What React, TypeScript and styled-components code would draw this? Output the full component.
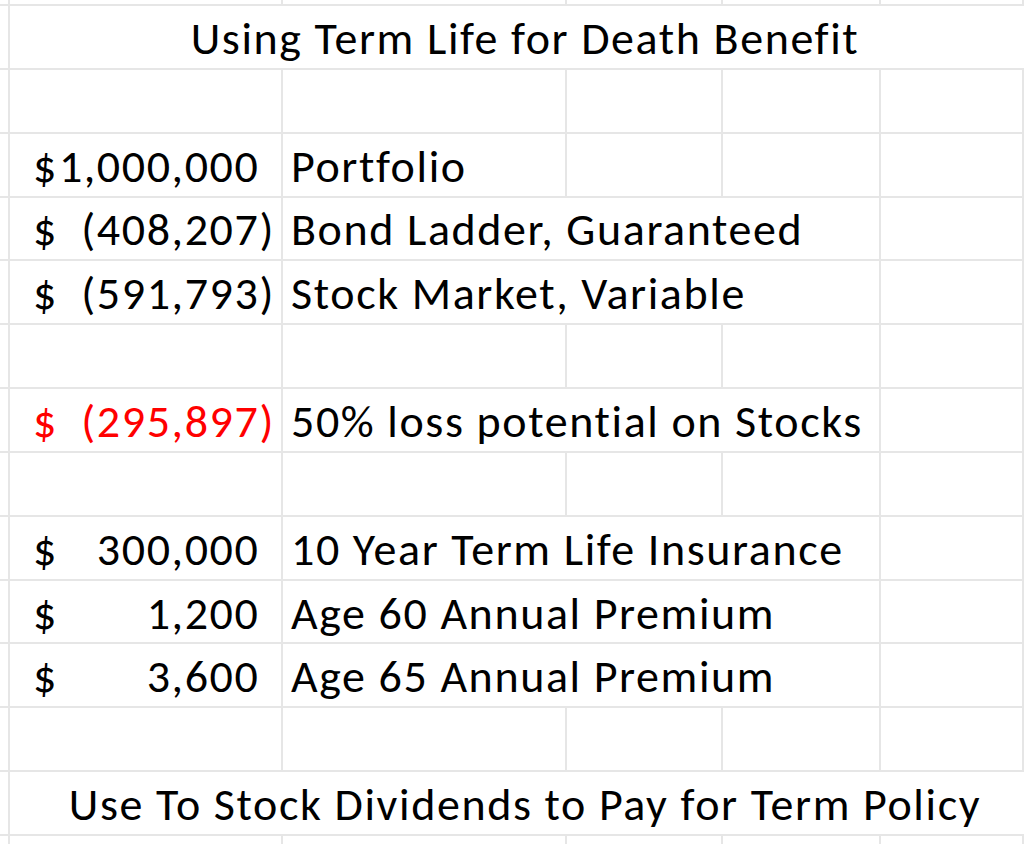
import styled, { createGlobalStyle } from "styled-components";

type Line = {
  amount?: number;
  label?: string;
  span?: number;
  red?: boolean;
};

const rows: Line[] = [
  {},
  { amount: 1000000, label: "Portfolio", span: 1 },
  { amount: -408207, label: "Bond Ladder, Guaranteed", span: 3 },
  { amount: -591793, label: "Stock Market, Variable", span: 3 },
  {},
  { amount: -295897, label: "50% loss potential on Stocks", span: 3, red: true },
  {},
  { amount: 300000, label: "10 Year Term Life Insurance", span: 3 },
  { amount: 1200, label: "Age 60 Annual Premium", span: 3 },
  { amount: 3600, label: "Age 65 Annual Premium", span: 3 },
  {},
];

const fmt = (n: number) => Math.abs(n).toLocaleString("en-US");

const BlankCells = ({ count }: { count: number }) => (
  <>
    {Array.from({ length: count }).map((_, j) => (
      <Cell key={j} />
    ))}
  </>
);

const App = () => {
  return (
    <>
      <GlobalStyle />
      <Sheet>
        <EdgeRow>
          <BlankCells count={6} />
        </EdgeRow>
        <Row>
          <Cell />
          <MergedCell>Using Term Life for Death Benefit</MergedCell>
        </Row>
        {rows.map((r, i) => {
          const span = r.label ? r.span ?? 1 : 1;
          const rest = 4 - span;
          return (
            <Row key={i}>
              <Cell />
              {r.amount !== undefined ? (
                <MoneyCell $red={r.red}>
                  <span>$</span>
                  <Amount>
                    {r.amount < 0 ? "(" : ""}
                    {fmt(r.amount)}
                    <Paren $show={r.amount < 0}>)</Paren>
                  </Amount>
                </MoneyCell>
              ) : (
                <Cell />
              )}
              {r.label ? <LabelCell $span={span}>{r.label}</LabelCell> : <Cell />}
              <BlankCells count={rest} />
            </Row>
          );
        })}
        <Row>
          <Cell />
          <MergedCell>Use To Stock Dividends to Pay for Term Policy</MergedCell>
        </Row>
        <TailRow>
          <BlankCells count={6} />
        </TailRow>
      </Sheet>
    </>
  );
};

const GlobalStyle = createGlobalStyle`
  html, body {
    margin: 0;
    padding: 0;
    background: #ffffff;
    overflow: hidden;
  }
  body {
    font-family: Carlito, Lato, "Open Sans", sans-serif;
    font-variant-ligatures: none;
    letter-spacing: 1.6px;
    color: #000000;
  }
`;

const Sheet = styled.div`
  width: 100%;
  height: 100vh;
  display: flex;
  flex-direction: column;
  overflow: hidden;
`;

const Row = styled.div`
  display: grid;
  grid-template-columns: 10px 273px 284px 156px 158px 1fr;
  height: 63.85px;
  flex-shrink: 0;
  border-bottom: 2px solid #e6e6e6;
  box-sizing: border-box;
`;

const EdgeRow = styled(Row)`
  height: 6px;
`;

const TailRow = styled(Row)`
  flex: 1;
  border-bottom: none;
`;

const Cell = styled.div`
  border-right: 2px solid #e6e6e6;
  box-sizing: border-box;
  min-width: 0;
`;

const MergedCell = styled.div`
  grid-column: span 5;
  display: flex;
  align-items: center;
  justify-content: center;
  padding: 2px 0 0 16px;
  font-size: 46px;
  white-space: nowrap;
`;

const MoneyCell = styled(Cell)<{ $red?: boolean }>`
  display: flex;
  align-items: center;
  justify-content: space-between;
  padding: 2px 6px 0 23px;
  font-size: 46px;
  color: ${(p) => (p.$red ? "#ff0000" : "#000000")};
  white-space: nowrap;
`;

const Amount = styled.span`
  display: flex;
`;

const Paren = styled.span<{ $show: boolean }>`
  visibility: ${(p) => (p.$show ? "visible" : "hidden")};
`;

const LabelCell = styled(Cell)<{ $span: number }>`
  grid-column: span ${(p) => p.$span};
  display: flex;
  align-items: center;
  padding: 2px 0 0 8px;
  font-size: 46px;
  white-space: nowrap;
`;

export default App;
